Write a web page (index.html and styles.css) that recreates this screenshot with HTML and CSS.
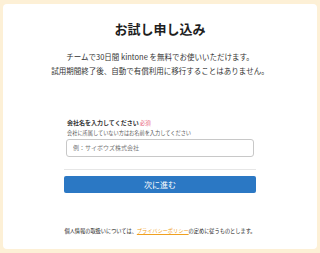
FILE: index.html
```html
<!DOCTYPE html>
<html lang="ja">
<head>
<meta charset="utf-8">
<title>お試し申し込み</title>
<link rel="stylesheet" href="styles.css">
</head>
<body>
<main class="card">
  <h1 class="title">お試し申し込み</h1>
  <p class="lead">チームで30日間 kintone を無料でお使いいただけます。<br>試用期間終了後、自動で有償利用に移行することはありません。</p>
  <form class="form">
    <label class="label" for="company">会社名を入力してください<span class="req">必須</span></label>
    <p class="hint">会社に所属していない方はお名前を入力してください</p>
    <input class="input" id="company" type="text" placeholder="例：サイボウズ株式会社">
    <hr class="divider">
    <button class="btn" type="button">次に進む</button>
  </form>
  <p class="note">個人情報の取扱いについては、<a class="link" href="#">プライバシーポリシー</a>の定めに従うものとします。</p>
</main>
</body>
</html>
```
FILE: styles.css
```css
html, body {
  margin: 0;
  padding: 0;
}
body {
  background: #fdf0d6;
  padding: 4px 3px;
  height: 253px;
  box-sizing: border-box;
  font-family: "Noto Sans CJK JP", "Noto Sans", sans-serif;
  color: #333;
}
.card {
  background: #fff;
  border-radius: 4px;
  height: 245px;
  box-sizing: border-box;
  padding-top: 17px;
  display: flex;
  flex-direction: column;
  align-items: center;
}
.title {
  margin: 0;
  font-size: 13px;
  line-height: 16px;
  font-weight: 700;
  color: #1e1e1e;
}
.lead {
  margin: 13px 0 0;
  font-size: 7.5px;
  line-height: 13.5px;
  text-align: center;
  color: #333;
}
.form {
  width: 192px;
  margin-top: 42px;
  display: flex;
  flex-direction: column;
}
.label {
  margin-left: 3px;
  font-size: 6px;
  line-height: 8px;
  font-weight: 700;
  color: #333;
}
.req {
  color: #e8607a;
  font-size: 5.5px;
  font-weight: 400;
  margin-left: 1px;
}
.hint {
  margin: 2px 0 0 3px;
  font-size: 5.2px;
  line-height: 7px;
  color: #555;
}
.input {
  margin: 2.5px 2px 0;
  height: 18px;
  box-sizing: border-box;
  border: 1px solid #c8c8c8;
  border-radius: 3px;
  padding: 0 6px;
  font-family: inherit;
  font-size: 6px;
  color: #333;
  outline: none;
}
.input::placeholder {
  color: #777;
}
.divider {
  margin: 12px 0 0;
  border: 0;
  border-top: 1px solid #e6e6e6;
  height: 0;
}
.btn {
  margin-top: 6px;
  height: 17px;
  border: 0;
  border-radius: 2px;
  background: #2b78c4;
  color: #fff;
  font-family: inherit;
  font-size: 8px;
  padding: 0;
}
.note {
  margin: 34px 0 0;
  font-size: 5.2px;
  line-height: 8px;
  color: #222;
}
.link {
  color: #f0a020;
  text-decoration: underline;
}
```
